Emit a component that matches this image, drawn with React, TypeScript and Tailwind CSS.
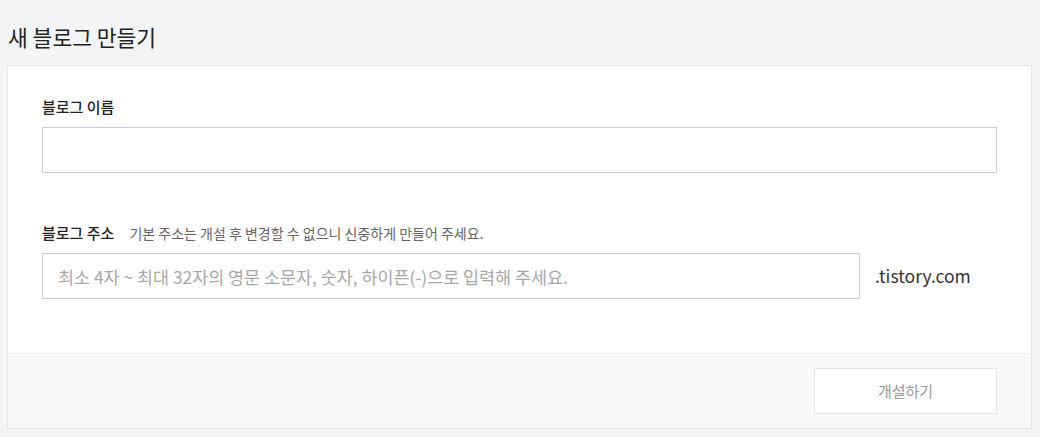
const font = "font-['Noto_Sans_CJK_KR','Noto_Sans',sans-serif]";

function Field({ placeholder, className }: { placeholder?: string; className?: string }) {
  return (
    <input
      type="text"
      placeholder={placeholder}
      className={`h-[46px] border border-[#c8cfd8] bg-white px-[15px] text-[17.4px] text-[#333] placeholder:text-[#a8a8a8] outline-none ${className ?? ""}`}
    />
  );
}

export default function App() {
  return (
    <div className={`min-h-[437px] bg-[#f3f4f6] pb-[8px] ${font}`}>
      <h1 className="pl-[8px] pt-[22px] text-[21.5px] leading-[30px] font-normal text-[#222]">
        새 블로그 만들기
      </h1>
      <div className="ml-[7px] mr-[8px] mt-[13px] border border-[#e3e5e9] bg-white">
        <div className="px-[34px] pt-[31px] pb-[54px]">
          <label className="block text-[15px] leading-[20px] font-medium text-[#222]">블로그 이름</label>
          <Field className="mt-[10px] w-full" />
          <div className="mt-[50px] flex items-baseline gap-[15px] leading-[20px]">
            <span className="text-[15px] font-medium text-[#222]">블로그 주소</span>
            <span className="text-[14px] text-[#666]">기본 주소는 개설 후 변경할 수 없으니 신중하게 만들어 주세요.</span>
          </div>
          <div className="mt-[10px] flex items-center">
            <Field className="w-[818px]" placeholder="최소 4자 ~ 최대 32자의 영문 소문자, 숫자, 하이픈(-)으로 입력해 주세요." />
            <span className="ml-[15px] text-[17.5px] text-[#333]">.tistory.com</span>
          </div>
        </div>
        <div className="flex justify-end border-t border-[#eef0f3] bg-[#f8f9fb] px-[34px] py-[14px]">
          <button className="h-[46px] w-[183px] border border-[#e1e4ea] bg-white text-[15px] text-[#999]">
            개설하기
          </button>
        </div>
      </div>
    </div>
  );
}
